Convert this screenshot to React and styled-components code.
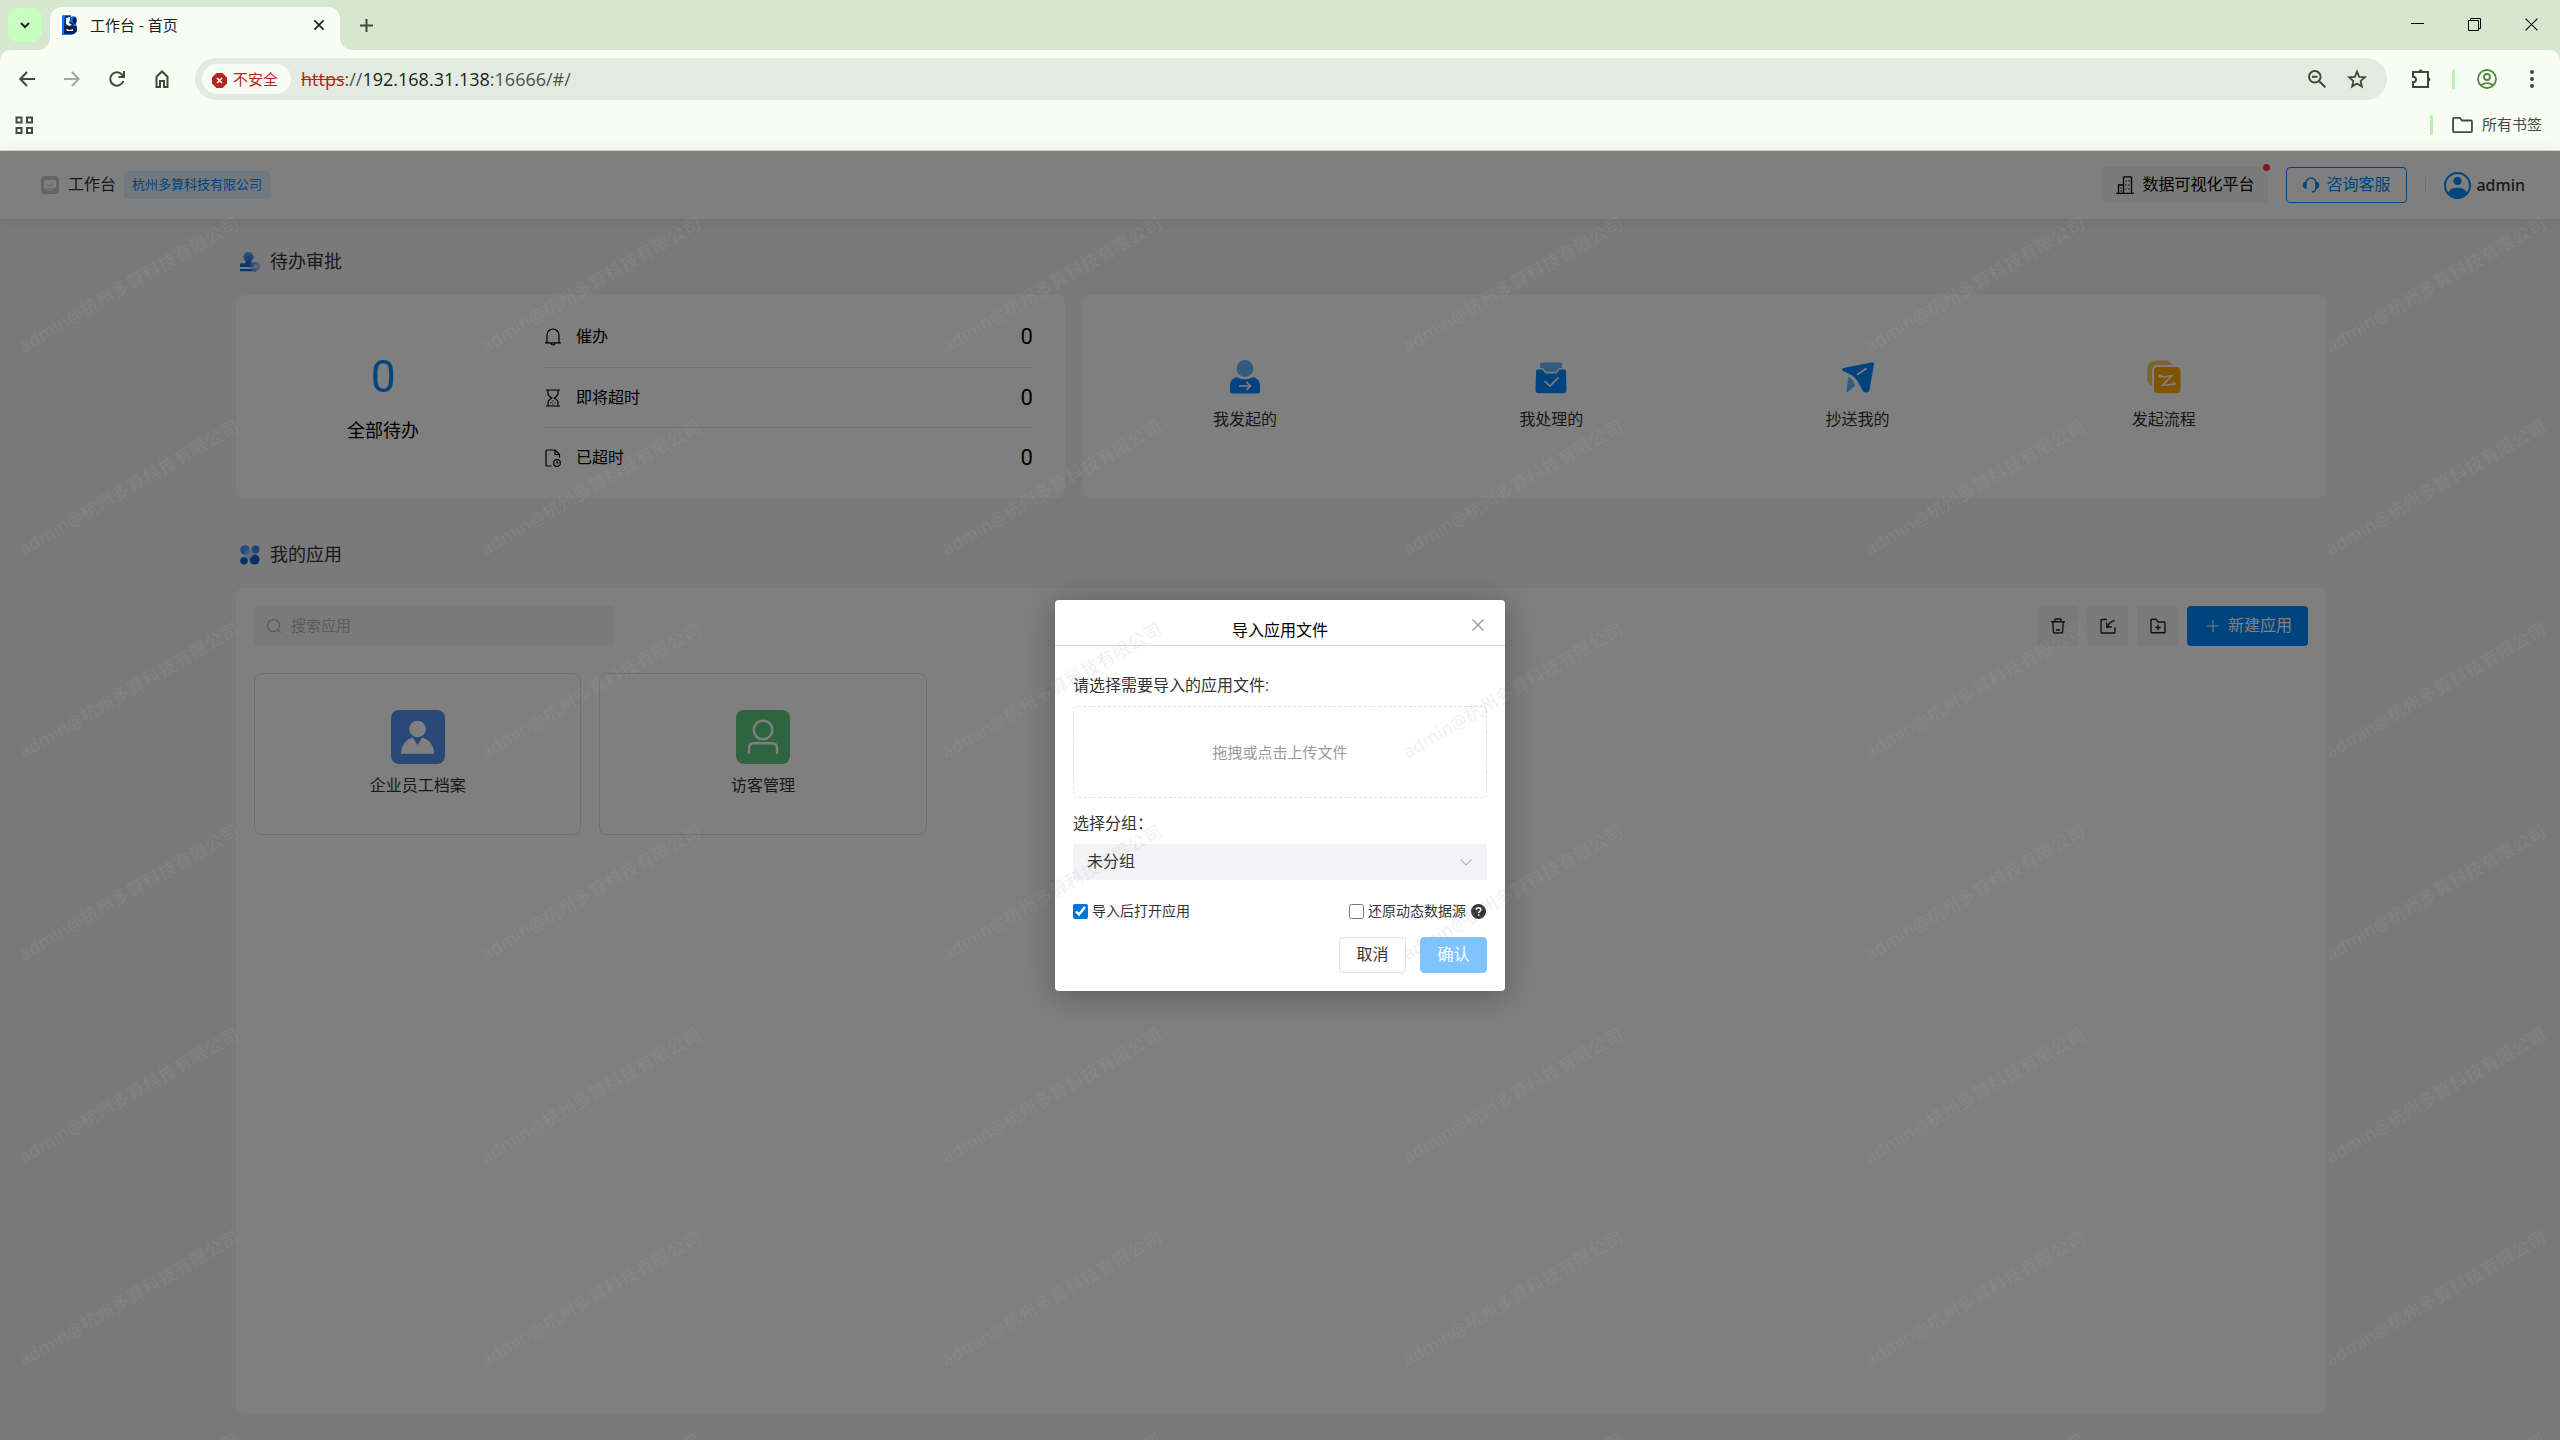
import React from 'react'
import styled, { createGlobalStyle, css } from 'styled-components'

const colors = {
    primary: '#0089ff',
    primaryLight: '#80c4ff',
    text: '#333',
    muted: '#999',
    border: '#dcdfe6',
    field: '#f4f4f7',
    page: '#f4f4f4',
    strip: '#d5e7cf',
    toolbar: '#f8fcf2',
    omnibox: '#e3ebe0',
    chromeInk: '#3c4b39',
    chromeAccent: '#b4f2ae'
}

const GlobalStyle = createGlobalStyle`
    *, *::before, *::after { box-sizing: border-box; }

    body {
        margin: 0;
        color: ${colors.text};
        font-family: Roboto, "Noto Sans CJK SC", sans-serif;
        font-size: 16px;
        line-height: 24px;
    }

    button, input, select { font: inherit; color: inherit; }
    button { padding: 0; border: 0; background: none; }
    svg { display: block; flex: none; }
`

const center = css`
    display: flex;
    align-items: center;
    justify-content: center;
`

const Screen = styled.div`
    display: flex;
    flex-direction: column;
    min-height: 100vh;
    background: ${colors.page};
`

/* ---------- browser ---------- */

const TabStrip = styled.div`
    display: flex;
    align-items: flex-end;
    height: 50px;
    padding-left: 8px;
    background: ${colors.strip};
`

const TabSearch = styled.button`
    ${center}
    width: 34px;
    height: 34px;
    margin-bottom: 8px;
    border-radius: 11px;
    background: #c8ffc1;
`

const Tab = styled.div`
    position: relative;
    display: flex;
    align-items: center;
    width: 290px;
    height: 43px;
    margin-left: 8px;
    padding: 0 12px 7px;
    border-radius: 12px 12px 0 0;
    background: ${colors.toolbar};
    color: #1c211b;
    font-size: 15px;

    &::before,
    &::after {
        content: '';
        position: absolute;
        bottom: 0;
        width: 12px;
        height: 12px;
    }

    &::before {
        left: -12px;
        background: radial-gradient(circle at 0 0, ${colors.strip} 12px, ${colors.toolbar} 12px);
    }

    &::after {
        right: -12px;
        background: radial-gradient(circle at 100% 0, ${colors.strip} 12px, ${colors.toolbar} 12px);
    }
`

const TabTitle = styled.span`
    flex: 1;
    margin-left: 12px;
    font-family: "Noto Sans", "Noto Sans CJK SC", sans-serif;
`

const TabButton = styled.button`
    ${center}
    width: 18px;
    height: 18px;
`

const NewTab = styled.button`
    ${center}
    width: 34px;
    height: 34px;
    margin: 0 auto 8px 9px;
`

const WindowButton = styled.button`
    ${center}
    align-self: flex-start;
    width: 57px;
    height: 49px;
`

const ToolbarWrapper = styled.div`
    background: ${colors.strip};
`

const Toolbar = styled.div`
    display: flex;
    align-items: center;
    height: 50px;
    padding: 8px 6px 0 4px;
    border-radius: 10px 10px 0 0;
    background: ${colors.toolbar};
`

const ToolButton = styled.button`
    ${center}
    width: ${({ $width }) => $width || 45}px;
    height: 40px;
`

const Omnibox = styled.div`
    display: flex;
    flex: 1;
    align-items: center;
    height: 42px;
    margin: 0 12px 0 11px;
    padding: 0 10px 0 7px;
    border-radius: 21px;
    background: ${colors.omnibox};
`

const SecurityChip = styled.button`
    display: flex;
    align-items: center;
    gap: 6px;
    height: 30px;
    padding: 2px 13px 0 10px;
    border-radius: 15px;
    background: ${colors.toolbar};
    color: #b3261e;
    font-size: 15px;
`

const Address = styled.div`
    flex: 1;
    margin-left: 10px;
    color: #4a5348;
    font-family: "Open Sans", "Noto Sans", sans-serif;
    font-size: 18px;

    s { color: #b3261e; }
    b { color: #1a1f19; font-weight: 400; }
`

const ChromeDivider = styled.span`
    width: 3px;
    height: 20px;
    margin: 0 ${({ $gap }) => $gap}px;
    border-radius: 2px;
    background: ${colors.chromeAccent};
`

const BookmarkBar = styled.div`
    display: flex;
    align-items: center;
    justify-content: space-between;
    height: 51px;
    padding: 0 18px 0 15px;
    border-bottom: 1px solid #c9dcc5;
    background: ${colors.toolbar};
    color: #434b41;
    font-size: 15px;
`

const BookmarkGroup = styled.div`
    display: flex;
    align-items: center;
`

const BookmarkFolder = styled.button`
    display: flex;
    align-items: center;
    gap: 9px;
`

/* ---------- workbench ---------- */

const Workbench = styled.div`
    position: relative;
    display: flex;
    flex: 1;
    flex-direction: column;
`

const Header = styled.header`
    display: flex;
    align-items: center;
    height: 68px;
    padding: 0 35px 0 41px;
    background: #fff;
    box-shadow: 0 2px 16px rgba(0, 0, 0, 0.08);
`

const HeaderTitle = styled.span`
    margin: 0 8px 0 9px;
`

const CompanyTag = styled.span`
    margin-right: auto;
    padding: 2px 8px;
    border-radius: 4px;
    background: #e3f2ff;
    color: ${colors.primary};
    font-size: 13px;
`

const HeaderButton = styled.button`
    position: relative;
    display: flex;
    align-items: center;
    height: 36px;
    margin-right: 18px;
    border-radius: 4px;
    gap: ${({ $outlined }) => ($outlined ? 7 : 8)}px;
    padding: 0 ${({ $outlined }) => ($outlined ? 16 : 13)}px;
    border: 1px solid ${({ $outlined }) => ($outlined ? colors.primary : 'transparent')};
    background: ${({ $outlined }) => ($outlined ? '#fff' : colors.page)};
    color: ${({ $outlined }) => ($outlined ? colors.primary : '#000')};
`

const RedDot = styled.i`
    position: absolute;
    top: -4px;
    right: -3px;
    width: 7px;
    height: 7px;
    border-radius: 50%;
    background: #f8304c;
`

const HeaderDivider = styled.span`
    width: 1px;
    height: 16px;
    margin-right: 18px;
    background: ${colors.border};
`

const Account = styled.button`
    display: flex;
    align-items: center;
    gap: 5px;
    font-family: "Noto Sans", sans-serif;
    font-weight: 500;
`

const Content = styled.main`
    display: flex;
    flex: 1;
    flex-direction: column;
    padding: 29px 234px 27px 236px;
`

const SectionTitle = styled.h2`
    display: flex;
    align-items: center;
    gap: 10px;
    height: 28px;
    margin: 0 0 19px 4px;
    font-size: 18px;
    font-weight: 400;
    line-height: 28px;
`

const SummaryRow = styled.div`
    display: grid;
    grid-template-columns: 2fr 3fr;
    gap: 18px;
    margin-bottom: 43px;
`

const Card = styled.section`
    border-radius: 8px;
    background: #fff;
`

const TodoCard = styled(Card)`
    display: grid;
    grid-template-columns: 294px 1fr;
    gap: 14px;
    padding: 12px 32px 11px 0;
    color: #000;
`

const TodoTotal = styled.div`
    display: flex;
    flex-direction: column;
    align-items: center;
    justify-content: center;
    gap: 14px;
    padding-top: 2px;
    font-size: 18px;
    line-height: 28px;
`

const TotalNumber = styled.strong`
    color: ${colors.primary};
    font-size: 44px;
    font-weight: 400;
    line-height: 52px;
`

const TodoList = styled.ul`
    margin: 0;
    padding: 0;
    list-style: none;
`

const TodoItem = styled.li`
    display: flex;
    align-items: center;
    gap: 14px;
    height: 60px;

    & + & { border-top: 1px solid #e4e4e4; }
`

const TodoCount = styled.span`
    margin-left: auto;
    font-size: 22px;
`

const ShortcutCard = styled(Card)`
    display: grid;
    grid-template-columns: repeat(4, 1fr);
    align-items: center;
    padding: 0 9px 2px;
`

const Shortcut = styled.button`
    display: flex;
    flex-direction: column;
    align-items: center;
    gap: 14px;
`

const AppsCard = styled(Card)`
    flex: 1;
    padding: 18px;
`

const AppsToolbar = styled.div`
    display: flex;
    align-items: center;
    gap: 9px;
    margin-bottom: 27px;
`

const SearchBox = styled.label`
    display: flex;
    align-items: center;
    gap: 10px;
    width: 360px;
    height: 40px;
    margin-right: auto;
    padding: 0 13px;
    border-radius: 4px;
    background: ${colors.page};
`

const SearchInput = styled.input`
    flex: 1;
    padding: 0;
    border: 0;
    outline: 0;
    background: none;
    font-size: 15px;

    &::placeholder { color: #b8b8b8; }
`

const IconButton = styled.button`
    ${center}
    width: 41px;
    height: 40px;
    border-radius: 4px;
    background: ${colors.page};
`

const NewAppButton = styled.button`
    ${center}
    gap: 9px;
    width: 121px;
    height: 40px;
    padding-left: 4px;
    border-radius: 4px;
    background: ${colors.primary};
    color: #fff;
`

const AppGrid = styled.div`
    display: grid;
    grid-template-columns: repeat(6, 1fr);
    gap: 18px;
`

const AppTile = styled.button`
    ${center}
    flex-direction: column;
    gap: 10px;
    height: 162px;
    border: 1px solid ${colors.border};
    border-radius: 8px;
`

const AppIcon = styled.span`
    ${center}
    width: 54px;
    height: 54px;
    border-radius: 8px;
    background: ${({ $color }) => $color};
`

/* ---------- dialog ---------- */

const Mask = styled.div`
    ${center}
    position: absolute;
    inset: 0;
    background: rgba(0, 0, 0, 0.5);
`

const Dialog = styled.div`
    width: 450px;
    border-radius: 4px;
    background: #fff;
    box-shadow: 0 4px 32px rgba(0, 0, 0, 0.3);
`

const DialogHeader = styled.div`
    position: relative;
    height: 46px;
    padding-top: 19px;
    border-bottom: 1px solid #d8d8d8;
    color: #000;
    text-align: center;
`

const DialogClose = styled.button`
    ${center}
    position: absolute;
    top: 15px;
    right: 17px;
    width: 20px;
    height: 20px;
`

const DialogBody = styled.div`
    padding: 28px 18px 18px;
`

const FieldLabel = styled.label`
    display: block;
    margin-bottom: 8px;
`

const DropZone = styled.button`
    ${center}
    width: 100%;
    height: 92px;
    margin-bottom: 14px;
    padding-top: 2px;
    border: 1px dashed ${colors.border};
    border-radius: 5px;
    color: ${colors.muted};
    font-size: 15px;
`

const SelectBox = styled.div`
    display: flex;
    align-items: center;
    height: 36px;
    padding-right: 15px;
    background: ${colors.field};
`

const Select = styled.select`
    flex: 1;
    height: 36px;
    padding: 0 14px;
    border: 0;
    outline: 0;
    appearance: none;
    background: none;
`

const OptionRow = styled.div`
    display: flex;
    align-items: center;
    gap: 5px;
    margin-top: 19px;
    padding-right: 1px;
    font-size: 14px;
`

const Option = styled.label`
    display: flex;
    align-items: center;
    gap: 4px;

    &:first-child { margin-right: auto; }
`

const Checkbox = styled.input.attrs({ type: 'checkbox' })`
    width: 15px;
    height: 15px;
    margin: 0;
    accent-color: #0075d8;
`

const Actions = styled.div`
    display: flex;
    justify-content: flex-end;
    gap: 14px;
    margin-top: 14px;
`

const ActionButton = styled.button`
    width: 67px;
    height: 36px;
    border: 1px solid ${({ $primary }) => ($primary ? colors.primaryLight : colors.border)};
    border-radius: 4px;
    background: ${({ $primary }) => ($primary ? colors.primaryLight : '#fff')};
    color: ${({ $primary }) => ($primary ? '#fff' : colors.text)};
`

/* ---------- watermark ---------- */

const WatermarkLayer = styled.div`
    position: absolute;
    inset: 0;
    overflow: hidden;
    pointer-events: none;
`

const WatermarkGrid = styled.div`
    display: grid;
    grid-template-columns: repeat(6, 1fr);
    grid-template-rows: repeat(7, 1fr);
    width: 2768px;
    height: 1419px;
    margin: 32px 0 0 -102px;
`

const WatermarkText = styled.span`
    place-self: center;
    color: rgba(168, 168, 168, 0.16);
    font-family: "Noto Sans", "Noto Sans CJK SC", sans-serif;
    font-size: 18px;
    font-weight: 500;
    white-space: nowrap;
    transform: rotate(-30deg);
`

/* ---------- icons ---------- */

const Icon = ({ size = 20, width, box = 24, stroke = 2, color = 'currentColor', children }) => (
    <svg
        width={width || size}
        height={size}
        viewBox={`0 0 ${box} ${box}`}
        fill="none"
        stroke={color}
        strokeWidth={stroke}
        overflow="visible"
        aria-hidden="true">
        {children}
    </svg>
)

const Favicon = () => (
    <svg width="16" height="20" viewBox="0 0 16 20" aria-hidden="true">
        <path d="M1 0h8v2l2-1 3 1 1 3-1 4 1 3v4l-3 3-3 1H0V1z" fill="#1477f2" />
        <path d="M2 10l4 1 8 0 1 2v3l-3 3H2z" fill="#0b1f4b" />
        <path d="M3 1h5l1 3-1 3 4 2-2 3-8-2z" fill="#0d2a60" />
        <path d="M4 3l4-1v3l-1 3 3 2-3 1-3-2zM4 14l4 1 3-1v2H5z" fill="#f4f7fb" />
        <ellipse cx="12.500" cy="5.500" rx="2" ry="3.200" fill="#0b1f4b" />
    </svg>
)

const StampIcon = () => (
    <svg width="20" height="20" viewBox="0 0 20 20" aria-hidden="true">
        <defs>
            <linearGradient id="stamp" x1="0" y1="0" x2="0" y2="1">
                <stop offset="0" stopColor="#57a5ff" />
                <stop offset="1" stopColor="#0d5fd8" />
            </linearGradient>
        </defs>
        <path d="M8.500 0a5 5 0 0 1 3 9c-.6.7-.2 2 1.200 2.300H16V15H0v-2.200c0-.9.600-1.500 1.500-1.500h3c1.300-.3 1.800-1.600 1-2.300a5 5 0 0 1 3-9z" fill="url(#stamp)" />
        <path d="M0 17h16v2.200H0z" fill="#1766dc" />
        <circle cx="15" cy="14.500" r="5" fill="#79aef5" opacity=".7" />
        <path d="M14.800 12v3h2.400" stroke="#e8f2ff" strokeWidth="1.200" fill="none" />
    </svg>
)

const AppsIcon = () => (
    <svg width="20" height="20" viewBox="0 0 20 20" aria-hidden="true">
        <circle cx="5" cy="5" r="4.800" fill="#4f95f0" />
        <circle cx="15.500" cy="4.500" r="4" fill="#3f86ea" />
        <circle cx="4" cy="15.800" r="3.800" fill="#0f62d6" />
        <circle cx="14.600" cy="14.600" r="5" fill="#0f62d6" />
        <circle cx="9" cy="9" r="4.600" fill="#a5c9f7" opacity=".6" />
    </svg>
)

const MonitorIcon = () => (
    <svg width="18" height="18" viewBox="0 0 18 18" aria-hidden="true">
        <rect width="18" height="18" rx="4" fill="#c5c8cf" />
        <rect x="3" y="4" width="12" height="8.500" rx="1.500" fill="#fff" />
        <path d="M7 10.500V9M9 10.500V8M11 10.500V6.500" stroke="#c5c8cf" />
        <path d="M6 14.200h6" stroke="#fff" />
    </svg>
)

const BuildingIcon = () => (
    <Icon size={18} box={18} stroke={1.3}>
        <path d="M0 17.300h18M2.500 17V9h5M7.500 17V1.500c0-.4.3-.7.700-.7h6.600c.4 0 .7.300.7.700V17M4.500 12.200h1.200M4.500 14.800h1.200M9.500 5h1M12.500 5h1M9.500 9h1M12.500 9h1M9.500 13h1M12.500 13h1" />
    </Icon>
)

const HeadsetIcon = () => (
    <Icon size={16} box={16} stroke={1.3}>
        <path d="M3 6a5 5 0 0 1 10 0v4.500c0 2.500-1.500 4.300-4.300 4.500" />
        <path d="M3 5.500v5.500C1.200 11 .4 9.700.4 8.300S1.200 5.500 3 5.500zM13 5.500V11c1.800 0 2.600-1.300 2.600-2.700S14.800 5.500 13 5.500z" fill="currentColor" />
    </Icon>
)

const AvatarIcon = () => (
    <svg width="27" height="27" viewBox="0 0 27 27" aria-hidden="true">
        <circle cx="13.500" cy="13.500" r="12.500" fill="none" stroke={colors.primary} strokeWidth="2" />
        <circle cx="13.500" cy="9" r="4" fill={colors.primary} />
        <path d="M4 21c1.500-3.500 4.500-5.300 9.500-5.300S21.500 17.500 23 21a12 12 0 0 1-19 0z" fill={colors.primary} />
    </svg>
)

const BellIcon = () => (
    <Icon size={18} box={18} stroke={1.2}>
        <path d="M1 14.800h16M3 14.800V7a6 6 0 0 1 12 0v7.800M7 15c.1 1.300.9 2 2 2s1.900-.7 2-2" />
    </Icon>
)

const HourglassIcon = () => (
    <Icon size={18} box={18} stroke={1.2}>
        <path d="M2 1h14M2 17h14M4 1v3.500c0 2 1.200 2.800 3.800 4.500C5.200 10.700 4 11.500 4 13.500V17M14 1v3.500c0 2-1.200 2.800-3.800 4.500 2.600 1.700 3.800 2.500 3.800 4.500V17M6.500 13.500h1M8.500 11.800h1M10.500 14h1M7.800 15.200h1" />
    </Icon>
)

const OverdueIcon = () => (
    <Icon size={18} box={18} stroke={1.2}>
        <path d="M7.500 17H3c-.6 0-1-.4-1-1V2c0-.6.4-1 1-1h8l4.500 4.500V8.500M11 1v4.500h4.500" />
        <circle cx="13" cy="14" r="3.300" />
        <path d="M13 12.300V14h1.500" />
    </Icon>
)

const StartedIcon = () => (
    <svg width="34" height="34" viewBox="0 0 34 34" aria-hidden="true">
        <circle cx="17" cy="8.500" r="8.400" fill="#66b5ff" />
        <path d="M9 17.200c1.500 0 2.500 2 8 2s6.500-2 8-2c4.500.6 7 4 7 8.300v6c0 1.300-.9 2-2 2H4c-1.200 0-2-.8-2-2v-6c0-4.400 2.500-7.700 7-8.300z" fill={colors.primary} />
        <path d="M11 26h11.500M18.500 22l4 4-4 4" fill="none" stroke="#fff" strokeWidth="1.600" />
    </svg>
)

const HandledIcon = () => (
    <svg width="34" height="34" viewBox="0 0 34 34" aria-hidden="true">
        <path d="M8 2.500h18c1.200 0 2 .8 2 2V8h-3l-2.700 3.800H11.700L9 8H6V4.500c0-1.200.8-2 2-2z" fill="#66b5ff" />
        <path d="M4 9.500h4.500l3 4h11l3-4H30c1.200 0 2 .8 2 2l.5 18.500c0 2-1.200 3.300-3.200 3.300H4.700c-2 0-3.200-1.300-3.200-3.300L2 11.500c0-1.200.8-2 2-2z" fill={colors.primary} />
        <path d="M10.500 21l5.500 5 8.500-8.500" fill="none" stroke="#fff" strokeWidth="1.600" />
    </svg>
)

const CopiedIcon = () => (
    <svg width="34" height="34" viewBox="0 0 34 34" aria-hidden="true">
        <path d="M31.500 2.200c1 0 1.600.7 1.500 1.700l-4.500 26c-.5 2.800-5 3.600-6.500 1.200-3.200-5-5-10.500-8.700-13.800C9.500 14 5.200 12.800 1.800 10.800.5 10 .8 8.300 2.300 8z" fill={colors.primary} />
        <path d="M7.500 16.800c3.300 1.800 5.200 4.800 6.800 9L7 31.800c-.9.700-1.600.3-1.500-.8z" fill="#66b5ff" />
        <path d="M16 14.800l9.500-6.500" stroke="#fff" strokeWidth="1.800" />
    </svg>
)

const FlowIcon = () => (
    <svg width="34" height="34" viewBox="0 0 34 34" aria-hidden="true">
        <path d="M5 26C2 24.500.2 22 .2 19V9.500A9 9 0 0 1 9.200.4h9c3 0 6 2 7.500 4.600H11c-3.500 0-6 2.500-6 6z" fill="#ffc65c" />
        <rect x="7" y="7" width="26.500" height="26.300" rx="4" fill="#ffa900" />
        <path d="M13 16l4 1 8-1.500-9 9.500h4l7-1" fill="none" stroke="#fff" strokeWidth="1.700" />
        <circle cx="13" cy="16" r="1.800" fill="#fff" />
        <circle cx="27" cy="23.800" r="1.800" fill="#fff" />
    </svg>
)

const EmployeeIcon = () => (
    <svg width="34" height="34" viewBox="0 0 34 34" fill="#fff" aria-hidden="true">
        <circle cx="16.500" cy="9" r="8.300" />
        <path d="M11.800 17.500l4.700 7.500 4.700-7.500c7.500 2 11.800 8.500 12 16.300H0c.2-7.800 4.300-14.300 11.800-16.300z" />
    </svg>
)

const VisitorIcon = () => (
    <Icon size={36} box={36} stroke={2.4} color="#fff">
        <circle cx="18" cy="11" r="9.300" />
        <path d="M4 35v-6c0-3 2-4.800 4.800-4.800h18.400C30 24.200 32 26 32 29v6" />
    </Icon>
)

const TrashIcon = () => (
    <Icon size={16} box={16} stroke={1.4} color="#222">
        <path d="M1 3.800h14M5 3.800V1.700c0-.4.3-.7.700-.7h4.600c.4 0 .7.300.7.700v2.100M2.800 4l.7 10.300c0 .4.300.7.700.7h7.600c.4 0 .7-.3.700-.7L13.200 4M6 12h4" />
    </Icon>
)

const ImportIcon = () => (
    <Icon size={16} box={16} stroke={1.4} color="#222">
        <path d="M7 1.500H1.800c-.5 0-.8.300-.8.800v11.900c0 .5.300.8.800.8h12.400c.5 0 .8-.3.800-.8V9.500M14.500 2.500C11 3.300 9 5 7.300 9M6.500 4.500L7 9.500l4.800-.800" />
    </Icon>
)

const FolderAddIcon = () => (
    <Icon size={16} box={16} stroke={1.4} color="#222">
        <path d="M1 14V2c0-.5.300-.8.800-.8H6L8 4h6.200c.5 0 .8.300.8.800V14c0 .5-.3.800-.8.800H1.800c-.5 0-.8-.3-.8-.8zM5.300 9.500h5.400M8 6.800v5.400" />
    </Icon>
)

const CrossIcon = ({ size, color, stroke = 1.2 }) => (
    <Icon size={size} box={12} stroke={stroke} color={color}>
        <path d="M.5.500l11 11M11.500.500l-11 11" />
    </Icon>
)

const PlusIcon = ({ size, color, stroke }) => (
    <Icon size={size} box={12} stroke={stroke} color={color}>
        <path d="M6 0v12M0 6h12" />
    </Icon>
)

const HelpIcon = () => (
    <svg width="15" height="15" viewBox="0 0 15 15" aria-hidden="true">
        <circle cx="7.500" cy="7.500" r="7.500" fill="#333" />
        <path d="M5.300 5.800c0-1.300.9-2.100 2.200-2.100s2.300.8 2.300 2c0 1.500-2.200 1.700-2.200 3.300M7.600 10.300v1.500" fill="none" stroke="#fff" strokeWidth="1.500" />
    </svg>
)

/* ---------- data ---------- */

const todos = [
    { label: '催办', count: 0, icon: BellIcon },
    { label: '即将超时', count: 0, icon: HourglassIcon },
    { label: '已超时', count: 0, icon: OverdueIcon }
]

const shortcuts = [
    { label: '我发起的', icon: StartedIcon },
    { label: '我处理的', icon: HandledIcon },
    { label: '抄送我的', icon: CopiedIcon },
    { label: '发起流程', icon: FlowIcon }
]

const apps = [
    { label: '企业员工档案', color: '#5193f0', icon: EmployeeIcon },
    { label: '访客管理', color: '#5fc983', icon: VisitorIcon }
]

const Browser = () => (
    <>
        <TabStrip>
            <TabSearch aria-label="搜索标签页">
                <Icon size={12} box={12} color="#1c211b"><path d="M2 4l4 4 4-4" /></Icon>
            </TabSearch>
            <Tab>
                <Favicon />
                <TabTitle>工作台 - 首页</TabTitle>
                <TabButton aria-label="关闭标签页">
                    <CrossIcon size={10} stroke={2} color="#1c211b" />
                </TabButton>
            </Tab>
            <NewTab aria-label="新标签页">
                <PlusIcon size={13} stroke={1.8} color={colors.chromeInk} />
            </NewTab>
            <WindowButton aria-label="最小化">
                <Icon size={13} box={13} stroke={1} color="#000"><path d="M0 5.500h13" /></Icon>
            </WindowButton>
            <WindowButton aria-label="还原">
                <Icon size={13} box={13} stroke={1} color="#000">
                    <path d="M.5 2.500h10v10H.5zM2.500 2.500v-2h10v10h-2" />
                </Icon>
            </WindowButton>
            <WindowButton aria-label="关闭">
                <CrossIcon size={13} stroke={1} color="#000" />
            </WindowButton>
        </TabStrip>
        <ToolbarWrapper>
            <Toolbar>
                <ToolButton aria-label="后退">
                    <Icon size={16} box={16} color={colors.chromeInk}><path d="M16 8H1.500M8 1L1.300 8 8 15" /></Icon>
                </ToolButton>
                <ToolButton aria-label="前进">
                    <Icon size={16} box={16} color="#a2aa9f"><path d="M0 8h14.500M8 1l6.700 7L8 15" /></Icon>
                </ToolButton>
                <ToolButton aria-label="重新加载">
                    <Icon size={16} box={16} color={colors.chromeInk}>
                        <path d="M14.300 10A6.700 6.700 0 1 1 13 3.600l1.500 1.900M15 0v6H9.500" />
                    </Icon>
                </ToolButton>
                <ToolButton aria-label="主页">
                    <Icon size={18} box={18} color={colors.chromeInk}>
                        <path d="M3.500 17V6.700L9 1.500l5.500 5.200V17H11v-6H7v6z" />
                    </Icon>
                </ToolButton>
                <Omnibox>
                    <SecurityChip>
                        <svg width="15" height="15" viewBox="0 0 15 15" aria-hidden="true">
                            <path d="M4.500 0h6L15 4.500v6L10.500 15h-6L0 10.500v-6z" fill="#b3261e" />
                            <path d="M5 5l5 5M10 5l-5 5" stroke="#fff" strokeWidth="1.600" />
                        </svg>
                        不安全
                    </SecurityChip>
                    <Address><s>https</s>://<b>192.168.31.138</b>:16666/#/</Address>
                    <ToolButton $width={40} aria-label="缩放">
                        <Icon size={18} box={18} color={colors.chromeInk}>
                            <circle cx="6.800" cy="6.800" r="5.800" />
                            <path d="M11 11l6.300 6.300M4 6.800h5.600" />
                        </Icon>
                    </ToolButton>
                    <ToolButton $width={40} aria-label="为此标签页添加书签">
                        <Icon size={20} box={20} stroke={1.8} color={colors.chromeInk}>
                            <path d="M10 2.500l2.200 5.300 5.700.5-4.300 3.700 1.300 5.600L10 14.600l-4.900 3 1.300-5.600-4.300-3.700 5.700-.5z" />
                        </Icon>
                    </ToolButton>
                </Omnibox>
                <ToolButton $width={44} aria-label="扩展程序">
                    <Icon size={20} box={20} color={colors.chromeInk}>
                        <path d="M2 3h15v15H2v-4.800c2 .2 3-1 3-2.700s-1-2.900-3-2.700z" />
                        <path d="M7.500 2.500a2 2 0 0 1 4 0zM17.500 8.500a2 2 0 0 1 0 4z" fill={colors.chromeInk} stroke="none" />
                    </Icon>
                </ToolButton>
                <ChromeDivider $gap={9} />
                <ToolButton $width={46} aria-label="个人资料">
                    <Icon size={20} box={20} stroke={1.8} color="#4c8a3f">
                        <circle cx="10" cy="10" r="9" />
                        <circle cx="10" cy="8" r="3" />
                        <path d="M4 16.300c3.500-3 8.500-3 12 0" />
                    </Icon>
                </ToolButton>
                <ToolButton $width={44} aria-label="更多">
                    <svg width="4" height="18" viewBox="0 0 4 18" fill={colors.chromeInk} aria-hidden="true">
                        <circle cx="2" cy="2" r="2" />
                        <circle cx="2" cy="9" r="2" />
                        <circle cx="2" cy="16" r="2" />
                    </svg>
                </ToolButton>
            </Toolbar>
        </ToolbarWrapper>
        <BookmarkBar>
            <Icon size={19} box={19}>
                <path d="M1.500 1.500h5v5h-5zM12 1.500h5v5h-5zM1.500 12h5v5h-5zM12 12h5v5h-5z" />
            </Icon>
            <BookmarkGroup>
                <ChromeDivider $gap={19} />
                <BookmarkFolder>
                    <Icon size={18} width={21} box={20}>
                        <path d="M-.5 17V3c0-.6.400-1 1-1H7l2.500 3h10c.6 0 1 .4 1 1v11c0 .6-.4 1-1 1H.5c-.6 0-1-.4-1-1z" />
                    </Icon>
                    所有书签
                </BookmarkFolder>
            </BookmarkGroup>
        </BookmarkBar>
    </>
)

const ImportDialog = () => (
    <Dialog role="dialog" aria-labelledby="import-title">
        <DialogHeader>
            <span id="import-title">导入应用文件</span>
            <DialogClose aria-label="关闭">
                <CrossIcon size={12} color="#909399" />
            </DialogClose>
        </DialogHeader>
        <DialogBody>
            <FieldLabel htmlFor="app-file">请选择需要导入的应用文件:</FieldLabel>
            <DropZone id="app-file">拖拽或点击上传文件</DropZone>
            <FieldLabel htmlFor="app-group">选择分组：</FieldLabel>
            <SelectBox>
                <Select id="app-group" defaultValue="none">
                    <option value="none">未分组</option>
                </Select>
                <Icon size={12} box={12} stroke={1.2} color="#b4b8c0"><path d="M.5 3.500L6 9l5.500-5.500" /></Icon>
            </SelectBox>
            <OptionRow>
                <Option>
                    <Checkbox defaultChecked />
                    导入后打开应用
                </Option>
                <Option>
                    <Checkbox />
                    还原动态数据源
                </Option>
                <HelpIcon />
            </OptionRow>
            <Actions>
                <ActionButton>取消</ActionButton>
                <ActionButton $primary>确认</ActionButton>
            </Actions>
        </DialogBody>
    </Dialog>
)

const Watermark = () => (
    <WatermarkLayer aria-hidden="true">
        <WatermarkGrid>
            {Array.from({ length: 42 }, (_, i) => (
                <WatermarkText key={i}>admin@杭州多算科技有限公司</WatermarkText>
            ))}
        </WatermarkGrid>
    </WatermarkLayer>
)

const App = () => (
    <Screen>
        <GlobalStyle />
        <Browser />
        <Workbench>
            <Header>
                <MonitorIcon />
                <HeaderTitle>工作台</HeaderTitle>
                <CompanyTag>杭州多算科技有限公司</CompanyTag>
                <HeaderButton>
                    <BuildingIcon />
                    数据可视化平台
                    <RedDot />
                </HeaderButton>
                <HeaderButton $outlined>
                    <HeadsetIcon />
                    咨询客服
                </HeaderButton>
                <HeaderDivider />
                <Account>
                    <AvatarIcon />
                    admin
                </Account>
            </Header>
            <Content>
                <SectionTitle><StampIcon />待办审批</SectionTitle>
                <SummaryRow>
                    <TodoCard>
                        <TodoTotal>
                            <TotalNumber>0</TotalNumber>
                            全部待办
                        </TodoTotal>
                        <TodoList>
                            {todos.map(({ label, count, icon: TodoIcon }) => (
                                <TodoItem key={label}>
                                    <TodoIcon />
                                    {label}
                                    <TodoCount>{count}</TodoCount>
                                </TodoItem>
                            ))}
                        </TodoList>
                    </TodoCard>
                    <ShortcutCard>
                        {shortcuts.map(({ label, icon: ShortcutIcon }) => (
                            <Shortcut key={label}>
                                <ShortcutIcon />
                                {label}
                            </Shortcut>
                        ))}
                    </ShortcutCard>
                </SummaryRow>
                <SectionTitle><AppsIcon />我的应用</SectionTitle>
                <AppsCard>
                    <AppsToolbar>
                        <SearchBox>
                            <Icon size={14} box={14} stroke={1.2} color="#b0b0b0">
                                <circle cx="6.500" cy="6.500" r="6" />
                                <path d="M11 11l2.600 2.600" />
                            </Icon>
                            <SearchInput placeholder="搜索应用" aria-label="搜索应用" />
                        </SearchBox>
                        <IconButton aria-label="回收站"><TrashIcon /></IconButton>
                        <IconButton aria-label="导入应用"><ImportIcon /></IconButton>
                        <IconButton aria-label="新建分组"><FolderAddIcon /></IconButton>
                        <NewAppButton>
                            <PlusIcon size={12} stroke={1} color="#fff" />
                            新建应用
                        </NewAppButton>
                    </AppsToolbar>
                    <AppGrid>
                        {apps.map(({ label, color, icon: TileIcon }) => (
                            <AppTile key={label}>
                                <AppIcon $color={color}><TileIcon /></AppIcon>
                                {label}
                            </AppTile>
                        ))}
                    </AppGrid>
                </AppsCard>
            </Content>
            <Mask>
                <ImportDialog />
            </Mask>
            <Watermark />
        </Workbench>
    </Screen>
)

export default App
